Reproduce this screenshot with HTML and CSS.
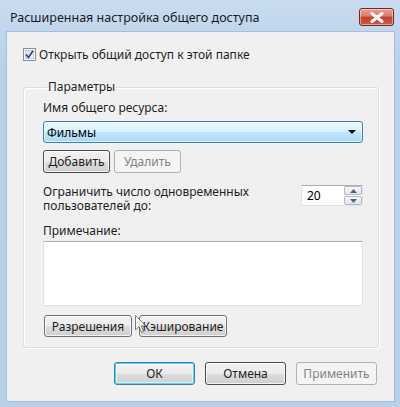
FILE: index.html
```html
<!DOCTYPE html>
<html lang="ru">
<head>
<meta charset="utf-8">
<title>Расширенная настройка общего доступа</title>
<link rel="stylesheet" href="styles.css">
</head>
<body>
<div class="frame">
  <div class="titlebar">
    <span class="title">Расширенная настройка общего доступа</span>
    <span class="close">
      <svg width="14" height="11" viewBox="0 0 14 11"><path d="M2 1.5 L12 9.5 M12 1.5 L2 9.5" stroke="#fff" stroke-width="3" stroke-linecap="round"/><path d="M2 1.5 L12 9.5 M12 1.5 L2 9.5" stroke="#fff" stroke-width="2"/></svg>
    </span>
  </div>
  <div class="client">
    <label class="check-row">
      <span class="checkbox">
        <svg width="9" height="9" viewBox="0 0 9 9"><path d="M1 4.5 L3.5 7.5 L8 0.8" fill="none" stroke="#2a3f8f" stroke-width="1.6"/></svg>
      </span>
      <span>Открыть общий доступ к этой папке</span>
    </label>
    <fieldset class="group">
      <legend>Параметры</legend>
      <div class="lbl first">Имя общего ресурса:</div>
      <div class="combo">
        <span>Фильмы</span>
        <span class="arrow"></span>
      </div>
      <div class="btn-row">
        <button class="btn focus-btn small">Добавить</button>
        <button class="btn disabled small">Удалить</button>
      </div>
      <div class="limit-row">
        <div class="lbl two">Ограничить число одновременных<br>пользователей до:</div>
        <div class="spin">
          <span class="spin-val">20</span>
          <span class="spin-btns">
            <span class="sb up"><svg width="7" height="4" viewBox="0 0 7 4"><path d="M0 4 L3.5 0 L7 4Z" fill="#4d6185"/></svg></span>
            <span class="sb down"><svg width="7" height="4" viewBox="0 0 7 4"><path d="M0 0 L3.5 4 L7 0Z" fill="#4d6185"/></svg></span>
          </span>
        </div>
      </div>
      <div class="lbl note">Примечание:</div>
      <div class="textarea"></div>
      <div class="btn-row bottom-row">
        <button class="btn wide">Разрешения</button>
        <button class="btn wide">Кэширование</button>
      </div>
    </fieldset>
    <div class="dlg-buttons">
      <button class="btn dlg default">ОК</button>
      <button class="btn dlg dark">Отмена</button>
      <button class="btn dlg disabled">Применить</button>
    </div>
    <svg class="cursor" width="12" height="19" viewBox="0 0 12 19"><path d="M0.5 0.5 L0.5 15 L4 11.8 L6.5 17.5 L8.5 16.6 L6.2 11 L11 11 Z" fill="#fff" stroke="#555" stroke-width="1"/></svg>
  </div>
</div>
</body>
</html>
```

FILE: styles.css
```css
* { box-sizing: border-box; }
html, body { margin: 0; padding: 0; }
body {
  width: 400px;
  height: 407px;
  overflow: hidden;
  font-family: "Noto Sans", "Open Sans", sans-serif;
  font-size: 12px;
  color: #1e1e1e;
}
.frame {
  width: 400px;
  height: 407px;
  display: flex;
  flex-direction: column;
  background: linear-gradient(#c9dcf0, #b9d1ea 60px, #b8d0ea);
}
.titlebar {
  height: 31px;
  display: flex;
  align-items: flex-start;
  padding-left: 10px;
  flex: none;
}
.title {
  margin-top: 9px;
  font-size: 12.5px;
  color: #1a1a1a;
}
.close {
  margin-left: auto;
  margin-right: 6px;
  margin-top: 8px;
  width: 35px;
  height: 18px;
  border: 1px solid #6b2a22;
  border-radius: 3px;
  background: linear-gradient(#e8a294, #d97a69 45%, #c4402c 50%, #cf5a44);
  box-shadow: inset 0 0 0 1px rgba(255,255,255,0.45);
  display: flex;
  align-items: center;
  justify-content: center;
}
.client {
  position: relative;
  flex: 1;
  margin: 0 5px 5px 6px;
  background: #f0f0f0;
  border: 1px solid #a9bdd4;
  padding: 15px 16px 0 16px;
}
.check-row {
  display: flex;
  align-items: center;
  gap: 3px;
  height: 14px;
}
.checkbox {
  width: 13px;
  height: 13px;
  border: 1px solid #8e8f8f;
  background: linear-gradient(135deg, #dadce0, #f5f6f7);
  box-shadow: inset 0 0 0 1px #f4f4f4, inset 0 0 0 2px #c5cbd2;
  display: flex;
  align-items: center;
  justify-content: center;
}
.group {
  margin: 19px 0 0 0;
  width: 356px;
  padding: 0 15px 0 19px;
  border: 1px solid #d5dfe5;
  border-radius: 3px;
  box-shadow: inset 1px 1px 0 #fff, 1px 1px 0 #fff;
  height: 268px;
  min-width: 0;
}
.group legend {
  padding: 0 1px;
  margin-left: 4px;
  line-height: 14px;
}
.lbl { line-height: 14px; }
.lbl.first { margin-top: 7px; }
.combo {
  margin-top: 6px;
  height: 22px;
  border: 1px solid #3c7fb1;
  border-radius: 3px;
  background: linear-gradient(#eaf6fd, #d9f0fc 50%, #bee6fd 51%, #a7d9f5);
  box-shadow: inset 0 0 0 1px rgba(255,255,255,0.6);
  display: flex;
  align-items: center;
  padding: 0 6px 0 3px;
  color: #000;
}
.arrow {
  margin-left: auto;
  width: 0;
  height: 0;
  border-left: 4px solid transparent;
  border-right: 4px solid transparent;
  border-top: 4px solid #000;
}
.btn-row {
  display: flex;
  gap: 4px;
  margin-top: 7px;
}
.btn {
  font: inherit;
  color: #1e1e1e;
  height: 23px;
  padding: 0;
  border: 1px solid #707070;
  border-radius: 3px;
  background: linear-gradient(#f2f2f2, #ebebeb 50%, #dddddd 51%, #cfcfcf);
  box-shadow: inset 0 0 0 1px rgba(255,255,255,0.75);
  display: flex;
  align-items: center;
  justify-content: center;
}
.btn.small { width: 67px; }
.btn.focus-btn { border-color: #4a4a4a; }
.btn.disabled {
  border-color: #adb2b5;
  background: #f4f4f4;
  color: #838383;
  box-shadow: none;
}
.limit-row {
  display: flex;
  align-items: flex-start;
  justify-content: space-between;
  margin-top: 12px;
}
.lbl.two { line-height: 14px; }
.spin {
  margin-top: 0;
  width: 62px;
  height: 21px;
  border: 1px solid #e2e3ea;
  border-top-color: #abadb3;
  background: #fff;
  display: flex;
}
.spin-val {
  flex: 1;
  padding-left: 5px;
  line-height: 19px;
  color: #000;
}
.spin-btns {
  width: 18px;
  display: flex;
  flex-direction: column;
  gap: 1px;
}
.sb {
  flex: 1;
  border: 1px solid #b5b8c3;
  border-radius: 2px;
  background: linear-gradient(#f6f7f9, #e2e5ea);
  display: flex;
  align-items: center;
  justify-content: center;
}
.lbl.note { margin-top: 11px; }
.textarea {
  margin-top: 3px;
  height: 65px;
  background: #fff;
  border: 1px solid #e2e3ea;
  border-top-color: #abadb3;
}
.bottom-row {
  margin-top: 9px;
  gap: 7px;
  padding-left: 1px;
}
.btn.wide { width: 88px; height: 22px; }
.dlg-buttons {
  display: flex;
  justify-content: flex-end;
  gap: 10px;
  margin-top: 14px;
  padding-right: 1px;
}
.btn.dlg { width: 81px; }
.btn.default {
  border-color: #3c7fb1;
  box-shadow: inset 0 0 0 1px #48d8fb, inset 0 0 0 2px rgba(255,255,255,0.5);
}
.btn.dark { border-color: #4b4b4b; }
.cursor {
  position: absolute;
  left: 128px;
  top: 283px;
  opacity: 0.75;
}
```
